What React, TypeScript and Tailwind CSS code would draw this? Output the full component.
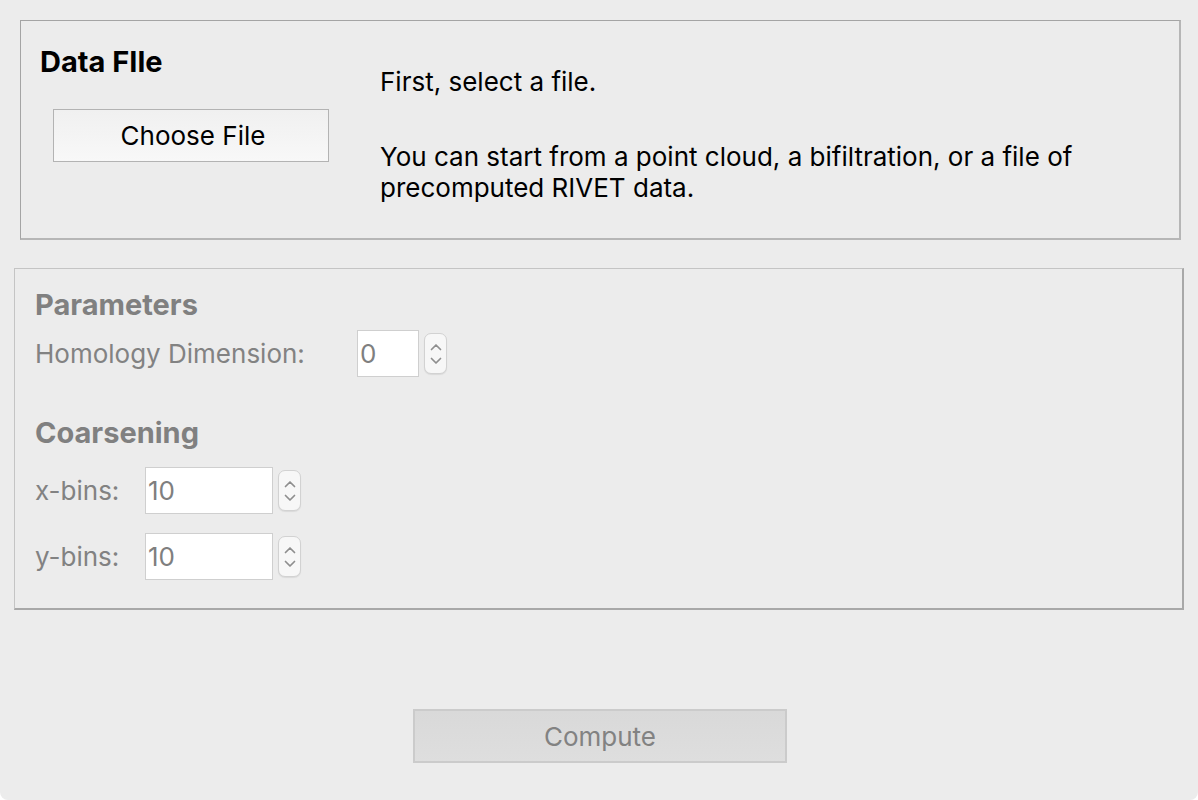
import React from "react";

const font = { fontFamily: "Inter, 'Liberation Sans', sans-serif" };

function Spinner() {
  return (
    <div className="w-[23px] h-[41px] rounded-[7px] bg-[#f7f7f7] border border-[#d2d2d2] shadow-[0_1px_1px_rgba(0,0,0,0.08)] flex flex-col items-center justify-center gap-[6px]">
      <svg width="12" height="8" viewBox="0 0 12 8">
        <path d="M1.5 6.5 L6 2 L10.5 6.5" fill="none" stroke="#8e8e8e" strokeWidth="1.7" strokeLinecap="round" strokeLinejoin="round" />
      </svg>
      <svg width="12" height="8" viewBox="0 0 12 8">
        <path d="M1.5 1.5 L6 6 L10.5 1.5" fill="none" stroke="#8e8e8e" strokeWidth="1.7" strokeLinecap="round" strokeLinejoin="round" />
      </svg>
    </div>
  );
}

function NumField({ value, width }: { value: string; width: string }) {
  return (
    <div className="flex items-center gap-[5px]">
      <div className={`${width} h-[47px] bg-white border border-[#cfcfcf] flex items-center pl-[2px] text-[26px] text-[#7f7f7f]`}>
        {value}
      </div>
      <Spinner />
    </div>
  );
}

export default function App() {
  return (
    <div className="w-[1198px] h-[800px] bg-[#ececec] overflow-hidden rounded-b-[8px] flex flex-col" style={font}>
      {/* Data File panel */}
      <div className="ml-[20px] mt-[20px] w-[1161px] h-[220px] border-t border-l border-[#a4a4a4] border-r-2 border-b-2 border-r-[#b6b6b6] border-b-[#b6b6b6] flex">
        <div className="w-[359px] pl-[19px] pt-[26px] flex flex-col">
          <div className="text-[29px] leading-[30px] font-bold text-black">Data FIle</div>
          <div className="ml-[13px] mt-[32px] w-[276px] h-[53px] border border-[#b3b3b3] bg-gradient-to-b from-[#f0f0f0] to-[#f8f8f8] flex items-center justify-center pl-[4px] text-[26px] text-black">
            Choose File
          </div>
        </div>
        <div className="pt-[45px] text-[26px] leading-[31px] text-black">
          <div>First, select a file.</div>
          <div className="mt-[44px] w-[720px]">
            You can start from a point cloud, a bifiltration, or a file of precomputed RIVET data.
          </div>
        </div>
      </div>

      {/* Parameters panel */}
      <div className="ml-[14px] mt-[28px] w-[1170px] h-[342px] border-t border-l border-[#c4c4c4] border-r-2 border-b-2 border-r-[#a8a8a8] border-b-[#a8a8a8] pl-[20px] pt-[21px] text-[#828282]">
        <div className="text-[29px] leading-[30px] font-bold text-[#808080]">Parameters</div>
        <div className="mt-[10px] flex items-center">
          <div className="w-[322px] text-[26px] leading-[30px]">Homology Dimension:</div>
          <NumField value="0" width="w-[62px]" />
        </div>
        <div className="mt-[41px] text-[29px] leading-[30px] font-bold text-[#808080]">Coarsening</div>
        <div className="mt-[19px] flex items-center">
          <div className="w-[110px] text-[26px] leading-[30px]">x-bins:</div>
          <NumField value="10" width="w-[128px]" />
        </div>
        <div className="mt-[19px] flex items-center">
          <div className="w-[110px] text-[26px] leading-[30px]">y-bins:</div>
          <NumField value="10" width="w-[128px]" />
        </div>
      </div>

      {/* Compute */}
      <div className="mt-[99px] flex justify-center">
        <div className="ml-[2px] w-[374px] h-[54px] border-2 border-[#cbcbcb] bg-gradient-to-b from-[#d9d9d9] to-[#dedede] flex items-center justify-center text-[26px] text-[#828282]">
          Compute
        </div>
      </div>
    </div>
  );
}
